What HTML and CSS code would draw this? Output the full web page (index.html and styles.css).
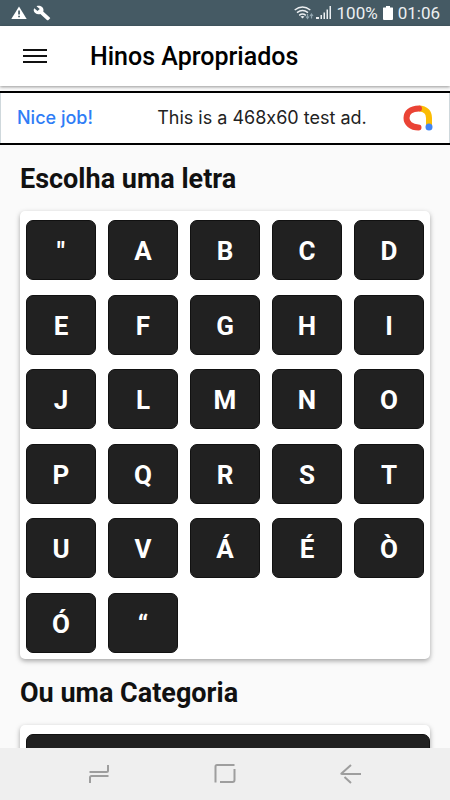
FILE: index.html
```html
<!DOCTYPE html>
<html lang="pt">
<head>
<meta charset="utf-8">
<meta name="viewport" content="width=device-width, initial-scale=1">
<title>Hinos Apropriados</title>
<link rel="stylesheet" href="styles.css">
</head>
<body>
<div class="status">
  <svg class="warn" viewBox="0 0 16 14" width="16" height="14"><path d="M8 0.5 15.7 13H0.3Z" fill="#fff"/><path d="M7.2 4.5h1.7v4H7.2zM7.2 9.7h1.7v1.6H7.2z" fill="#455a64"/></svg>
  <svg class="wrench" viewBox="0 0 24 24" preserveAspectRatio="none" width="18" height="16"><path fill="#fff" d="M22.7 19l-9.1-9.1c.9-2.3.4-5-1.5-6.9-2-2-5-2.4-7.4-1.3L9 6 6 9 1.6 4.7C.4 7.1.9 10.1 2.9 12.1c1.9 1.9 4.6 2.4 6.9 1.5l9.1 9.1c.4.4 1 .4 1.4 0l2.3-2.3c.5-.4.5-1.1.1-1.4z"/></svg>
  <span class="grow"></span>
  <svg class="wifi" viewBox="0 0 20 14" width="20" height="14" fill="none" stroke="#eceff1" stroke-width="1.5"><path d="M.7 4Q8.500-2.200 16.300 4M3 6.700Q8.500 2.400 14 6.700M5.200 9.300Q8.500 6.800 11.800 9.300"/><path d="M6.500 10.500Q8.500 9.300 10.500 10.500L8.500 12.500Z" fill="#eceff1" stroke="none"/><path d="M13.500 8v4M12 10.500l1.500 2 1.500-2M17.500 12.500v-4M16 10l1.500-2 1.500 2" stroke="#90a4ae" stroke-width="1.200"/></svg>
  <svg class="signal" viewBox="0 0 16 14" width="16" height="14" fill="#eceff1"><path d="M0 11h3v2H0zM4.500 9h1.500v4H4.500zM7.500 6.500h1.500V13H7.500zM10.500 3.500H12V13h-1.500zM13.500 0H15v13h-1.500z"/></svg>
  <span>100%</span>
  <svg class="battery" viewBox="0 0 10 14" width="10" height="14"><path fill="#fff" d="M3 0h4v1.500h2.500a.5.500 0 0 1 .5.500v11a1 1 0 0 1-1 1H1a1 1 0 0 1-1-1V2a.5.500 0 0 1 .5-.5H3z"/></svg>
  <time>01:06</time>
</div>
<header class="appbar">
  <button class="menu" aria-label="Menu"><svg viewBox="0 0 24 16" width="24" height="16"><path d="M0 1h24M0 7h24M0 13h24" stroke="#111" stroke-width="2"/></svg></button>
  <h1>Hinos Apropriados</h1>
</header>
<a class="ad" href="#">
  <span class="nice">Nice job!</span>
  <span class="copy">This is a 468x60 test ad.</span>
  <svg viewBox="0 0 30 26" width="30" height="26" fill="none" stroke-width="6"><path d="M16 3.500C23 3.500 26 8 26 13v9" stroke="#fbbc04"/><path d="M16 3.500C7.500 3.500 3.500 8 3.500 13S8 22.500 15.500 22.500" stroke="#ea4335" stroke-linecap="round"/><circle cx="26" cy="22" r="3.500" fill="#4285f4"/></svg>
</a>
<main>
  <h2>Escolha uma letra</h2>
  <section class="card letters">
    <button>"</button><button>A</button><button>B</button><button>C</button><button>D</button>
    <button>E</button><button>F</button><button>G</button><button>H</button><button>I</button>
    <button>J</button><button>L</button><button>M</button><button>N</button><button>O</button>
    <button>P</button><button>Q</button><button>R</button><button>S</button><button>T</button>
    <button>U</button><button>V</button><button>Á</button><button>É</button><button>Ò</button>
    <button>Ó</button><button>“</button>
  </section>
  <h2>Ou uma Categoria</h2>
  <section class="card categories"><button aria-label="Categoria"></button></section>
</main>
<nav>
  <button aria-label="Recentes"><svg viewBox="0 0 22 20" width="22" height="20"><path d="M1.500 8H18.500Q20 8 20 6.500V1M20.500 12H3.500Q2 12 2 13.500V19"/></svg></button>
  <button aria-label="Início"><svg viewBox="0 0 22 20" width="22" height="20"><path d="M20.500 1H3Q1.500 1 1.500 2.500V18.500M6 18H18.500Q20.500 18 20.500 16V5"/></svg></button>
  <button aria-label="Voltar"><svg viewBox="0 0 22 20" width="22" height="20"><path d="M11 1 1.500 9.500Q1 10 2 10H21M4.500 13l6.500 6"/></svg></button>
</nav>
</body>
</html>
```
FILE: styles.css
```css
* { box-sizing: border-box; }

body {
  margin: 0;
  height: 100vh;
  display: flex;
  flex-direction: column;
  overflow: hidden;
  background: #fafafa;
  color: #111;
  font-family: Roboto, "Liberation Sans", sans-serif;
}

button {
  border: 0;
  padding: 0;
  background: none;
  font: inherit;
  color: inherit;
}

svg { display: block; flex: none; }

.status {
  flex: none;
  height: 26px;
  padding: 0 10px 0 11px;
  display: flex;
  align-items: center;
  background: #455a64;
  color: #eceff1;
  font-size: 17px;
}
.wrench { margin-left: 6px; }
.grow { flex: 1; }
.signal { margin: 0 5px 0 2px; }
.battery { margin: 0 5px; }

.appbar {
  flex: none;
  height: 60px;
  padding: 2px 23px 0;
  display: flex;
  align-items: center;
  gap: 43px;
  background: #fff;
  box-shadow: 0 1px 3px rgba(0, 0, 0, .4);
}
h1 {
  margin: 0;
  font-size: 25px;
  line-height: 28px;
  font-weight: 500;
  color: #000;
}

.ad {
  flex: none;
  height: 54px;
  margin-top: 5px;
  padding: 0 17px;
  display: flex;
  align-items: center;
  justify-content: space-between;
  border: solid #000;
  border-width: 2px 0;
  background: #fff;
  box-shadow: inset 1px 0 #cfd8dc, inset -1px 0 #cfd8dc;
  color: #222;
  font: 400 18px/24px Inter, sans-serif;
  font-feature-settings: "calt" 0;
  text-decoration: none;
}
.nice { color: #2f7df6; font-weight: 500; }
.copy { margin-left: 28px; }

main {
  flex: 1;
  min-height: 0;
  overflow: hidden;
  padding: 0 20px;
}
h2 {
  margin: 0;
  padding: 20px 0 18px;
  font-size: 27px;
  line-height: 28px;
  font-weight: 700;
}

.card {
  border-radius: 5px;
  background: #fff;
  box-shadow: 0 2px 5px rgba(0, 0, 0, .35);
}
.card button {
  height: 60px;
  padding-top: 2px;
  border: 1px solid #111;
  border-radius: 7px;
  background: #212121;
  color: #fff;
  font-size: 26px;
  line-height: 28px;
  font-weight: 700;
}
.letters {
  min-height: 448px;
  padding: 9px 6px 6px;
  display: grid;
  grid-template-columns: repeat(5, 1fr);
  column-gap: 12px;
  align-content: space-between;
}
.categories {
  padding: 9px 0 6px 6px;
}
.categories button { display: block; width: 100%; }

nav {
  flex: none;
  height: 52px;
  padding: 0 36px;
  display: grid;
  grid-template-columns: repeat(3, 1fr);
  background: #efefef;
}
nav button { display: grid; place-items: center; }
nav svg { fill: none; stroke: #9e9e9e; stroke-width: 2; }
```
